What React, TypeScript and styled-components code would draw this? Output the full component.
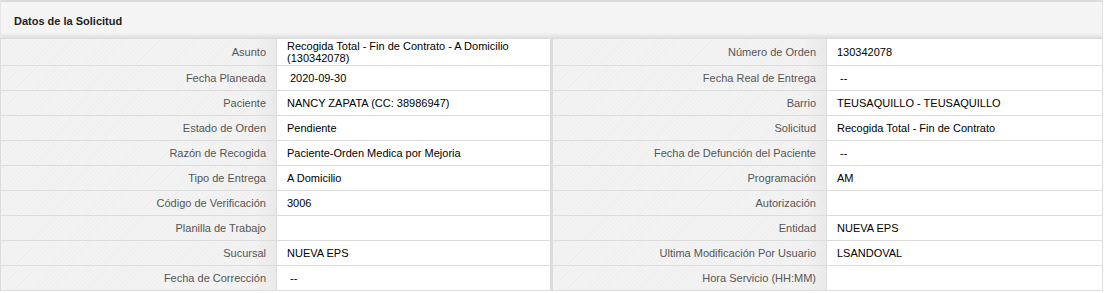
import React from 'react';
import styled, { createGlobalStyle } from 'styled-components';

const GlobalStyle = createGlobalStyle`
  html, body {
    margin: 0;
    padding: 0;
    background: #ffffff;
  }
  body {
    font-family: 'Liberation Sans', Arial, sans-serif;
  }
`;

const Panel = styled.div`
  width: 1103px;
  background: #ffffff;
`;

const Header = styled.div`
  display: flex;
  align-items: center;
  height: 38px;
  padding: 1px 0 0 13px;
  border-top: 2px solid #dcdcdc;
  border-left: 1px solid #e6e6e6;
  border-right: 1px solid #e2e2e2;
  background: linear-gradient(to bottom, #f5f5f5 0%, #f4f4f4 85%, #e9e9e9 93%, #dedede 100%);
  font-size: 11px;
  font-weight: bold;
  color: #1e1e1e;
  box-sizing: border-box;
`;

const Grid = styled.div`
  display: grid;
  grid-template-columns: 275px 275px 273px 275px;
  column-gap: 1px;
  row-gap: 1px;
  background: #dcdcdc;
  border: 1px solid #dcdcdc;
  border-bottom: none;
  padding-bottom: 1px;
`;

const Label = styled.div<{ $tall?: boolean }>`
  min-height: ${(p) => (p.$tall ? 26 : 24)}px;
  display: flex;
  align-items: center;
  justify-content: flex-end;
  padding-right: 10px;
  font-size: 11px;
  color: #555555;
  background:
    linear-gradient(to right, rgba(0, 0, 0, 0) 92%, rgba(0, 0, 0, 0.035) 100%),
    repeating-linear-gradient(135deg, #f3f3f3 0px, #f3f3f3 2px, #efefef 2px, #efefef 3px);
  box-sizing: border-box;
`;

const Value = styled.div<{ $gap?: boolean; $indent?: boolean }>`
  display: flex;
  align-items: center;
  padding: 0 8px 0 ${(p) => (p.$indent ? 13 : 10)}px;
  font-size: 11px;
  line-height: 12px;
  color: #000000;
  background: #ffffff;
  ${(p) => (p.$gap ? 'margin-right: 2px;' : '')}
  box-sizing: border-box;
`;

type Field = { label: string; value: string; indent?: boolean };

const rows: [Field, Field][] = [
  [
    { label: 'Asunto', value: 'Recogida Total - Fin de Contrato - A Domicilio (130342078)' },
    { label: 'Número de Orden', value: '130342078' },
  ],
  [
    { label: 'Fecha Planeada', value: '2020-09-30', indent: true },
    { label: 'Fecha Real de Entrega', value: '--', indent: true },
  ],
  [
    { label: 'Paciente', value: 'NANCY ZAPATA (CC: 38986947)' },
    { label: 'Barrio', value: 'TEUSAQUILLO - TEUSAQUILLO' },
  ],
  [
    { label: 'Estado de Orden', value: 'Pendiente' },
    { label: 'Solicitud', value: 'Recogida Total - Fin de Contrato' },
  ],
  [
    { label: 'Razón de Recogida', value: 'Paciente-Orden Medica por Mejoria' },
    { label: 'Fecha de Defunción del Paciente', value: '--', indent: true },
  ],
  [
    { label: 'Tipo de Entrega', value: 'A Domicilio' },
    { label: 'Programación', value: 'AM' },
  ],
  [
    { label: 'Código de Verificación', value: '3006' },
    { label: 'Autorización', value: '' },
  ],
  [
    { label: 'Planilla de Trabajo', value: '' },
    { label: 'Entidad', value: 'NUEVA EPS' },
  ],
  [
    { label: 'Sucursal', value: 'NUEVA EPS' },
    { label: 'Ultima Modificación Por Usuario', value: 'LSANDOVAL' },
  ],
  [
    { label: 'Fecha de Corrección', value: '--', indent: true },
    { label: 'Hora Servicio (HH:MM)', value: '' },
  ],
];

const App: React.FC = () => {
  return (
    <>
      <GlobalStyle />
      <Panel>
        <Header>Datos de la Solicitud</Header>
        <Grid>
          {rows.map(([left, right], i) => (
            <React.Fragment key={i}>
              <Label $tall={i === 0}>{left.label}</Label>
              <Value $gap $indent={left.indent}>{left.value}</Value>
              <Label $tall={i === 0}>{right.label}</Label>
              <Value $indent={right.indent}>{right.value}</Value>
            </React.Fragment>
          ))}
        </Grid>
      </Panel>
    </>
  );
};

export default App;
